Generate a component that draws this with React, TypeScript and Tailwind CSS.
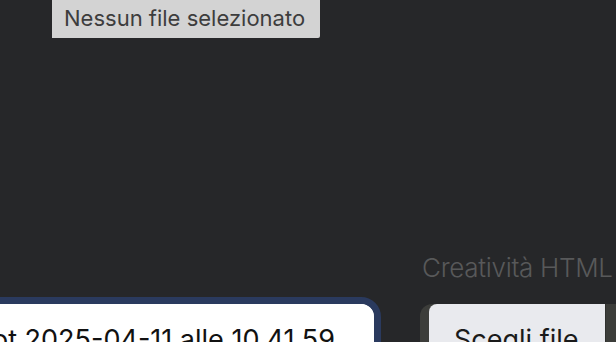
export default function App() {
  const font = { fontFamily: "Inter, 'Liberation Sans', sans-serif" };
  return (
    <div
      className="relative w-[616px] h-[342px] overflow-hidden bg-[#262729]"
      style={font}
    >
      <div className="absolute left-[52px] top-0 w-[268px] h-[38px] bg-[#d3d3d3] rounded-br-[2px] pl-[12px] pt-[5px] text-[22px] leading-[26px] text-[#3d3d3d] whitespace-nowrap">
        Nessun file selezionato
      </div>

      <div className="flex items-start pt-[253px]">
        <div className="ml-[-300px] mt-[44px] w-[681px] h-[120px] shrink-0 rounded-[20px] border-[7px] border-[#2a3a5e] bg-white">
          <div className="h-full rounded-[13px] bg-white flex justify-end pr-[39px] pt-[19px] text-[27px] leading-[33px] text-[#111] whitespace-nowrap overflow-hidden">
            Screenshot 2025-04-11 alle 10.41.59
          </div>
        </div>

        <div className="ml-[39px] flex flex-col shrink-0">
          <div className="h-[30px] pl-[2px] text-[26px] leading-[30px] font-light text-[#58595a] whitespace-nowrap tracking-[-0.3px]">
            Creatività HTML
          </div>
          <div className="mt-[21px] flex w-[260px] h-[60px] rounded-tl-[12px] bg-[#3c3d3a]">
            <div className="ml-[9px] w-[176px] h-full rounded-tl-[8px] bg-[#e9eaee] pl-[25px] pt-[19px] text-[27px] leading-[33px] text-[#1a1a1a] whitespace-nowrap">
              Scegli file
            </div>
            <div className="w-px h-full bg-[#2f302e]" />
          </div>
        </div>
      </div>
    </div>
  );
}
